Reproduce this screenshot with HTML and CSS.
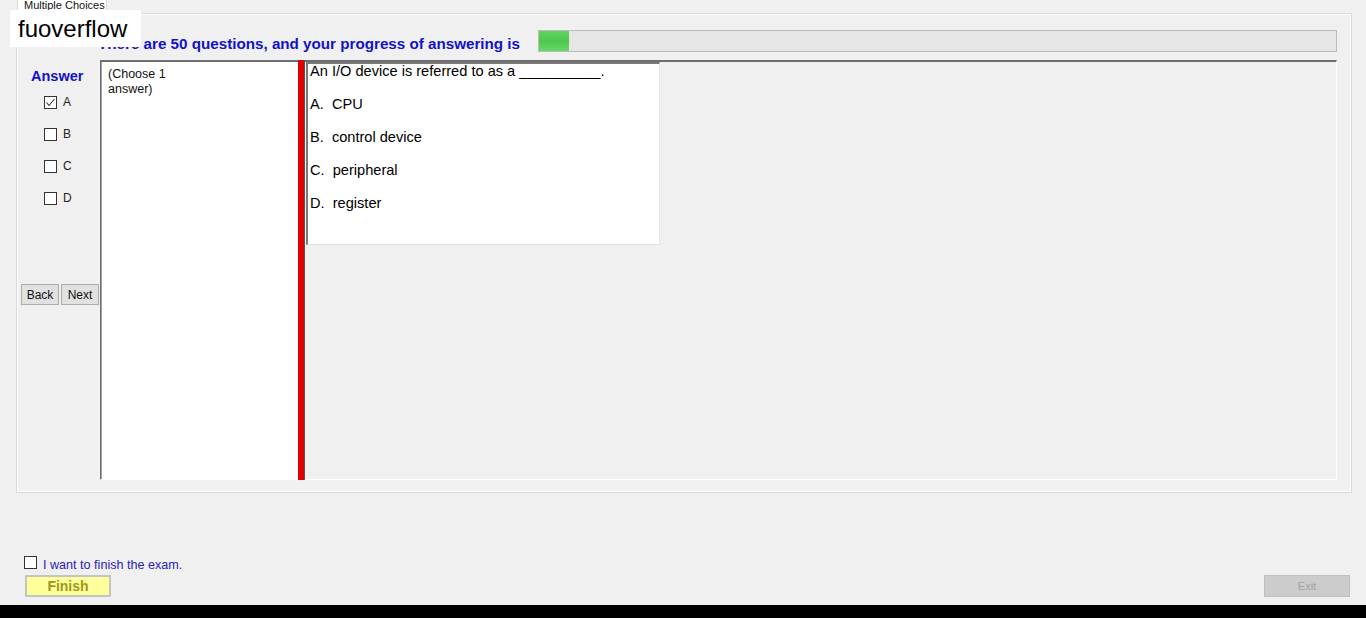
FILE: index.html
```html
<!DOCTYPE html>
<html>
<head>
<meta charset="utf-8">
<link rel="stylesheet" href="styles.css">
</head>
<body>
<div class="app">
  <div class="tabs"><div class="tab">Multiple Choices</div></div>
  <div class="panel">
    <div class="head">
      <div class="headtext">There are 50 questions, and your progress of answering is</div>
      <div class="progress"><div class="fill" style="width:30px"></div></div>
    </div>
    <div class="body">
      <div class="leftcol">
        <div class="answer">Answer</div>
        <div class="opts">
          <label class="opt"><span class="cb checked"><svg viewBox="0 0 13 13" width="13" height="13"><path d="M2.5 6.5 L5 9.5 L10.5 3" fill="none" stroke="#333" stroke-width="1.1"/></svg></span><span>A</span></label>
          <label class="opt"><span class="cb"></span><span>B</span></label>
          <label class="opt"><span class="cb"></span><span>C</span></label>
          <label class="opt"><span class="cb"></span><span>D</span></label>
        </div>
        <div class="navbtns">
          <button class="btn">Back</button>
          <button class="btn">Next</button>
        </div>
      </div>
      <div class="main">
        <div class="choose">(Choose 1<br>answer)</div>
        <div class="redbar"></div>
        <div class="qarea">
          <div class="qbox">
            <p>An I/O device is referred to as a __________.</p>
            <p>A.&nbsp; CPU</p>
            <p>B.&nbsp; control device</p>
            <p>C.&nbsp; peripheral</p>
            <p>D.&nbsp; register</p>
          </div>
        </div>
      </div>
    </div>
  </div>
  <div class="bottom">
    <div class="finishcol">
      <label class="finishcheck"><span class="cb"></span><span class="fctext">I want to finish the exam.</span></label>
      <button class="finish">Finish</button>
    </div>
    <button class="exit">Exit</button>
  </div>
  <div class="brand">fuoverflow</div>
</div>
<div class="blackbar"></div>
</body>
</html>
```
FILE: styles.css
```css
* { box-sizing: border-box; }
html, body { margin: 0; padding: 0; }
body {
  width: 1366px;
  height: 618px;
  overflow: hidden;
  background: #f0f0f0;
  font-family: "Liberation Sans", Arial, sans-serif;
  color: #000;
}
.app {
  position: relative;
  height: 605px;
  display: flex;
  flex-direction: column;
}
.tabs {
  height: 13px;
  padding-left: 17px;
  display: flex;
  overflow: hidden;
}
.tab {
  width: 90px;
  height: 14px;
  border: 1px solid #d9d9d9;
  border-bottom: none;
  background: #fff;
  font-size: 11px;
  line-height: 11px;
  color: #111;
  padding-left: 6px;
  margin-top: -1px;
  white-space: nowrap;
  overflow: hidden;
}
.panel {
  margin-left: 16px;
  width: 1336px;
  height: 480px;
  border: 1px solid #d9d9d9;
  box-shadow: inset 0 0 0 1px #fff;
  display: flex;
  flex-direction: column;
}
.head {
  display: flex;
  align-items: center;
  padding-top: 15px;
  padding-left: 81px;
  padding-right: 14px;
}
.headtext {
  width: 440px;
  font-size: 15.2px;
  font-weight: bold;
  color: #1212c8;
  white-space: nowrap;
  padding-top: 6px;
  line-height: 17px;
}
.progress {
  flex: 1;
  height: 22px;
  border: 1px solid #bcbcbc;
  background: #e6e6e6;
  display: flex;
}
.fill {
  height: 100%;
  background: linear-gradient(#5fd35f, #4fc84f 50%, #66d866);
}
.body {
  margin-top: 8px;
  display: flex;
  height: 420px;
  padding-right: 14px;
}
.leftcol {
  width: 83px;
  display: flex;
  flex-direction: column;
}
.answer {
  margin-top: 8px;
  padding-left: 14px;
  font-size: 14.5px;
  font-weight: bold;
  color: #1212c8;
  line-height: 16px;
}
.opts {
  margin-top: 12px;
  padding-left: 27px;
  display: flex;
  flex-direction: column;
  gap: 19px;
}
.opt {
  display: flex;
  align-items: center;
  gap: 6px;
  font-size: 12px;
  line-height: 13px;
  color: #222;
}
.cb {
  width: 13px;
  height: 13px;
  border: 1px solid #333;
  background: #fff;
  display: inline-flex;
  flex: none;
}
.cb svg { margin: -1px; }
.navbtns {
  margin-top: 79px;
  padding-left: 4px;
  display: flex;
  gap: 2px;
}
.btn {
  width: 38px;
  height: 21px;
  padding: 0;
  border: 1px solid #adadad;
  background: #e1e1e1;
  font-family: "Liberation Sans", Arial, sans-serif;
  font-size: 12px;
  color: #111;
}
.main {
  flex: 1;
  display: flex;
  border-top: 2px solid #6e6e6e;
  border-left: 1px solid #6e6e6e;
  border-right: 1px solid #fff;
  border-bottom: 1px solid #fff;
}
.choose {
  width: 197px;
  background: #fff;
  border-left: 1px solid #a0a0a0;
  padding: 5px 0 0 6px;
  font-size: 12.5px;
  line-height: 15px;
  color: #111;
}
.redbar {
  width: 7px;
  margin-top: -2px;
  margin-bottom: -1px;
  background: #e00000;
  border-right: 1px solid #555;
}
.qarea {
  flex: 1;
  padding-left: 1px;
}
.qbox {
  width: 354px;
  height: 183px;
  background: #fff;
  border-top: 2px solid #7a7a7a;
  border-left: 2px solid #7a7a7a;
  border-right: 1px solid #e3e3e3;
  border-bottom: 1px solid #e3e3e3;
  padding: 0 0 0 2px;
  font-size: 14.6px;
  line-height: 17px;
}
.qbox p {
  margin: -1px 0 17px 0;
}
.bottom {
  flex: 1;
  display: flex;
  justify-content: space-between;
  align-items: flex-end;
  padding: 0 16px 8px 24px;
}
.finishcol {
  display: flex;
  flex-direction: column;
  gap: 3px;
}
.finishcheck {
  display: flex;
  align-items: flex-start;
  gap: 6px;
}
.fctext {
  font-size: 12.6px;
  line-height: 14px;
  color: #2a22bb;
  margin-top: 2px;
}
.finish {
  margin-left: 1px;
  width: 86px;
  height: 22px;
  padding: 0;
  border: 2px solid #c4c4c4;
  background: #ffff9c;
  font-family: "Liberation Sans", Arial, sans-serif;
  font-size: 14px;
  font-weight: bold;
  color: #9a9a1a;
}
.exit {
  width: 86px;
  height: 22px;
  padding: 0;
  border: 1px solid #bfbfbf;
  background: #cccccc;
  font-family: "Liberation Sans", Arial, sans-serif;
  font-size: 11px;
  color: #a3a3a3;
}
.brand {
  position: absolute;
  left: 10px;
  top: 10px;
  width: 131px;
  height: 37px;
  background: #fff;
  font-size: 24px;
  line-height: 37px;
  padding-left: 8px;
  color: #000;
}
.blackbar {
  height: 13px;
  background: #000;
}
```
